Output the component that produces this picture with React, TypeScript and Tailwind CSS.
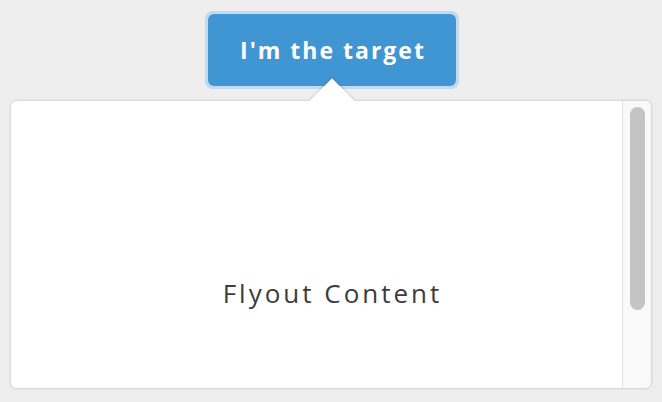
import React from "react";

const Flyout: React.FunctionComponent = () => {
  return (
    <div className="relative mx-[11px] mt-[12px] h-[287px] rounded-[6px] bg-white shadow-[0_0_2px_1px_rgba(0,0,0,0.12)]">
      {/* pointer */}
      <div className="absolute left-[305px] top-[-16px] h-[32px] w-[32px] rotate-45 bg-white shadow-[-1px_-1px_2px_rgba(0,0,0,0.12)]" />
      <div className="relative flex h-full overflow-hidden rounded-[6px]">
        <div className="flex flex-1 items-start justify-center bg-white pl-[32px] pt-[172px]">
          <span
            className="text-[26px] leading-[40px] tracking-[3px] text-[#3c3c3c]"
            style={{ fontFamily: '"Open Sans", sans-serif' }}
          >
            Flyout Content
          </span>
        </div>
        <div className="flex w-[29px] justify-center border-l border-[#e3e3e3] bg-[#f9f9f9] pt-[6px]">
          <div className="h-[203px] w-[15px] rounded-full bg-[#c4c4c4]" />
        </div>
      </div>
    </div>
  );
};

export default function App() {
  return (
    <div className="h-[402px] w-[662px] overflow-hidden bg-[#eeeeee] pt-[11px]">
      <div className="flex justify-center">
        <div className="ml-[2px] rounded-[8px] bg-[#c3d9ec] p-[3px]">
          <button
            className="flex h-[72px] w-[248px] items-center justify-center rounded-[6px] bg-[#4096d2] pl-[2px] text-[23px] font-bold tracking-[2px] text-white"
            style={{ fontFamily: '"Open Sans", sans-serif' }}
          >
            I'm the target
          </button>
        </div>
      </div>
      <Flyout />
    </div>
  );
}
